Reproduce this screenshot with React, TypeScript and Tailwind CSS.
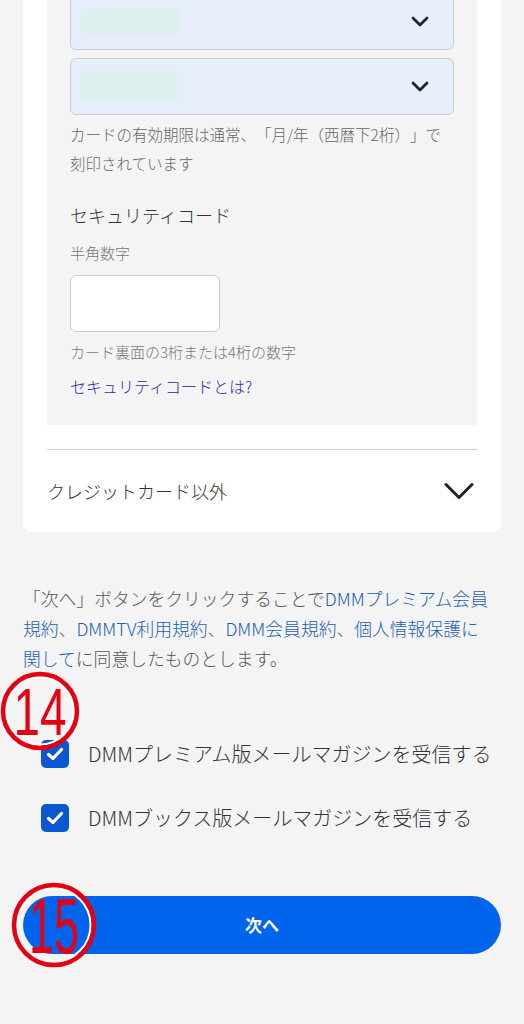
const jp = { fontFamily: '"Noto Sans CJK JP", "Noto Sans", sans-serif' }

function SelectBox({ blockW, blockH }: { blockW: string; blockH: string }) {
  return (
    <div className="h-[57px] rounded-md border border-[#c9ccd1] bg-[#e7eefb] flex items-center justify-between pl-[10px] pr-[24px]">
      <div className={`${blockW} ${blockH} bg-[#dcf0f0] rounded-sm`} />
      <svg width="18" height="11" viewBox="0 0 18 11" fill="none">
        <path d="M2 2l7 7 7-7" stroke="#222" strokeWidth="2.8" strokeLinecap="round" strokeLinejoin="round" />
      </svg>
    </div>
  )
}

function Check({ label }: { label: string }) {
  return (
    <div className="flex items-center gap-[19px]">
      <span className="h-[28px] w-[28px] rounded-[5px] bg-[#0b57d0] inline-flex items-center justify-center">
        <svg width="18" height="14" viewBox="0 0 18 14" fill="none">
          <path d="M2.5 7.5l4.5 4 8.5-9" stroke="#fff" strokeWidth="3.2" strokeLinecap="round" strokeLinejoin="round" />
        </svg>
      </span>
      <span className="text-[20px] leading-[28px] text-[#333]">{label}</span>
    </div>
  )
}

function Badge({ n, size, r, fs, w }: { n: string; size: number; r: number; fs: number; w: number }) {
  const c = size / 2
  return (
    <svg width={size} height={size} viewBox={`0 0 ${size} ${size}`}>
      <circle cx={c} cy={c} r={r - 3.5} fill="none" stroke="#fff" strokeWidth="2" />
      <circle cx={c} cy={c} r={r} fill="none" stroke="#e60012" strokeWidth="4.5" />
      <text
        x={c}
        y={c + fs * 0.36}
        textAnchor="middle"
        fontSize={fs}
        fill="#e60012"
        textLength={w}
        lengthAdjust="spacingAndGlyphs"
        style={{ fontFamily: '"Liberation Sans", Arial, sans-serif' }}
      >
        {n}
      </text>
    </svg>
  )
}

export default function App() {
  return (
    <div className="min-h-screen bg-[#f4f4f4] overflow-hidden font-light [text-spacing-trim:space-all]" style={jp}>
      <div className="mx-[23px] -mt-[7px] bg-white rounded-b-lg px-6">
        <div className="bg-[#f4f4f4] px-[23px] pb-[27px]">
          <div className="flex flex-col gap-2">
            <SelectBox blockW="w-[98px]" blockH="h-[25px]" />
            <SelectBox blockW="w-[96px]" blockH="h-[31px]" />
          </div>
          <p className="mt-[5px] text-[15.5px] leading-[29px] text-[#666]">
            カードの有効期限は通常、「月/年（西暦下2桁）」で
            <br />
            刻印されています
          </p>

          <p className="mt-6 text-[18px] leading-[27px] text-[#333]">セキュリティコード</p>
          <p className="mt-[13px] text-[15px] leading-[22px] text-[#777]">半角数字</p>
          <div className="mt-[11px] h-[57px] w-[150px] rounded-md border border-[#cccccc] bg-white" />
          <p className="mt-[9px] text-[15px] leading-[22px] text-[#777]">カード裏面の3桁または4桁の数字</p>
          <p className="mt-[11px] text-[16px] leading-[24px] text-[#2a2ba6]">セキュリティコードとは?</p>
        </div>

        <div className="mt-6 border-t border-[#cfcfcf] h-[83px] flex items-center justify-between pr-[3px]">
          <span className="text-[18px] text-[#333]">クレジットカード以外</span>
          <svg width="30" height="18" viewBox="0 0 30 18" fill="none">
            <path d="M2 2.5l13 13 13-13" stroke="#222" strokeWidth="3" strokeLinecap="round" strokeLinejoin="round" />
          </svg>
        </div>
      </div>

      <p className="ml-[23px] w-[470px] mt-[51px] text-[17.8px] leading-[30px] text-[#555]">
        「次へ」ボタンをクリックすることで
        <span className="text-[#1d5fb2]">DMMプレミアム会員規約</span>、
        <span className="text-[#1d5fb2]">DMMTV利用規約</span>、
        <span className="text-[#1d5fb2]">DMM会員規約</span>、
        <span className="text-[#1d5fb2]">個人情報保護に関して</span>に同意したものとします。
      </p>

      <div className="relative">
        <div className="absolute left-0 top-[-2px]">
          <Badge n="14" size={80} r={37} fs={66} w={53} />
        </div>
      </div>

      <div className="mt-[67px] ml-[41px] flex flex-col gap-9">
        <Check label="DMMプレミアム版メールマガジンを受信する" />
        <Check label="DMMブックス版メールマガジンを受信する" />
      </div>

      <div className="relative mx-[23px] mt-16">
        <button className="w-full h-[58px] rounded-full bg-[#0064ec] text-white text-[17px] font-bold">
          次へ
        </button>
        <div className="absolute left-[-15px] top-[-17px]">
          <Badge n="15" size={92} r={40} fs={78} w={50} />
        </div>
      </div>
    </div>
  )
}
